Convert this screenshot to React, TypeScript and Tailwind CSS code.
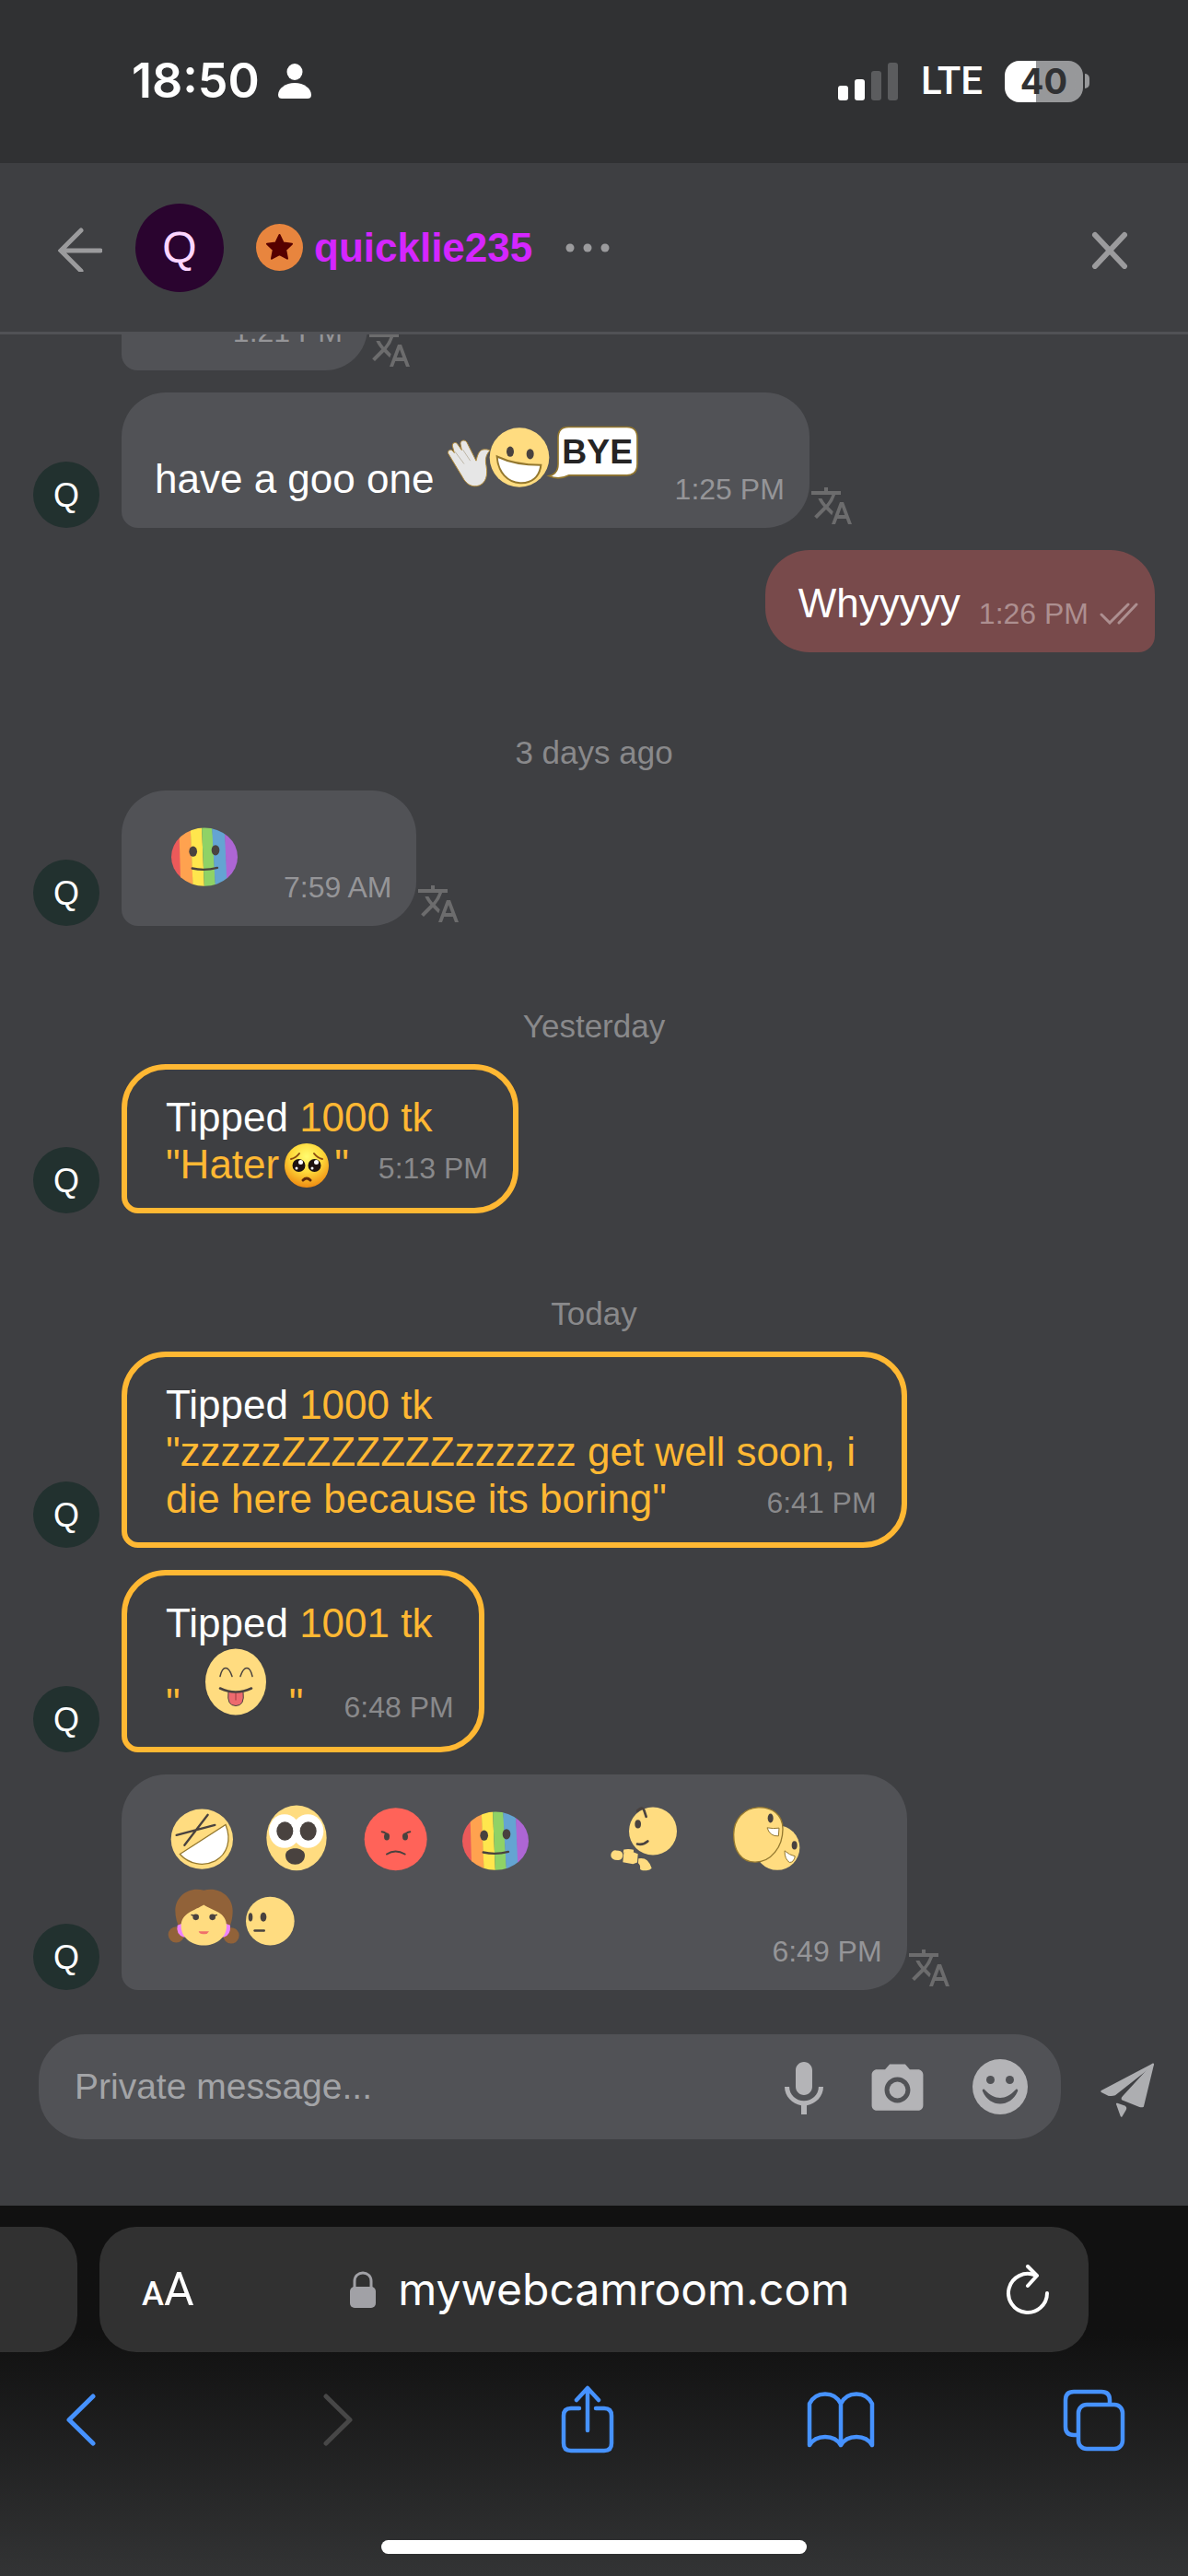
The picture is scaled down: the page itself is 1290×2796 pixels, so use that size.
import type { ReactNode } from "react";
import { MdCameraAlt, MdMic, MdTranslate } from "react-icons/md";

interface BubbleProps {
  time: string;
  lines?: ReactNode[];
  last?: ReactNode;
  avatar?: boolean;
  width?: string;
}

const YELLOW = "#ffdc80";
const INK = "#49423f";

/* ---------- Stickers ---------- */

const ByeSticker = () => (
  <svg className="inline-block h-[77px] w-[217px] align-baseline" viewBox="36 111 651 228">
    <path
      d="M44 212c-3-8 6-15 13-10l7 8-6-22c-2-10 10-15 16-7l14 20-4-20c-1-12 15-16 21-5l30 60c4-18 9-32 20-36 10-3 20 0 25 2-14 16-16 30-12 50 6 32-2 56-22 64-24 9-44-4-56-28Z"
      fill="#e6e6e6"
      stroke="#b08a3a"
      strokeWidth="3"
    />
    <path d="m66 206 30 40M92 200l24 36" stroke="#bdb6a6" strokeWidth="3" fill="none" />
    <circle cx="276" cy="225" r="97" fill={YELLOW} />
    <ellipse cx="246" cy="206" rx="12" ry="17" fill={INK} />
    <ellipse cx="311" cy="214" rx="12" ry="17" fill={INK} />
    <path
      d="M203 222c46 22 94 28 143 28-4 38-30 60-68 58-40-2-72-34-75-86Z"
      fill="#fff"
      stroke="#94782f"
      strokeWidth="6"
    />
    <path
      d="M436 126h190q34 0 34 36v84q0 37-34 37H438c-20 10-44 12-66 2 22-4 30-16 30-38v-85q0-36 34-36Z"
      fill="#fff"
      stroke="#94782f"
      strokeWidth="5"
    />
    <text
      x="530"
      y="245"
      textAnchor="middle"
      fontFamily="Liberation Sans, Arial, sans-serif"
      fontWeight="700"
      fontSize="112"
      fill="#262424"
    >
      BYE
    </text>
  </svg>
);

const LaughSticker = () => (
  <svg className="inline-block h-[77px] w-[108px] align-baseline" viewBox="54 84 324 228">
    <ellipse cx="208" cy="197" rx="101" ry="98" fill={YELLOW} />
    <path d="M125 184 250 151M151 217l76-99" stroke={INK} strokeWidth="7" strokeLinecap="round" />
    <path
      d="M136 246 285 150c20 50 6 96-34 118-40 20-86 10-115-22Z"
      fill="#fff"
      stroke="#94782f"
      strokeWidth="4"
    />
  </svg>
);

const ShockSticker = () => (
  <svg className="inline-block h-[77px] w-[108px] align-baseline" viewBox="378 84 324 228">
    <ellipse cx="516" cy="193" rx="98" ry="106" fill={YELLOW} />
    <ellipse cx="477" cy="171" rx="51" ry="55" fill="#fff" />
    <ellipse cx="553" cy="171" rx="51" ry="55" fill="#fff" />
    <ellipse cx="478" cy="171" rx="27" ry="31" fill={INK} />
    <ellipse cx="554" cy="171" rx="27" ry="31" fill={INK} />
    <path d="M480 250c0-30 63-30 63 0 0 40-63 40-63 0Z" fill={INK} />
  </svg>
);

const AngrySticker = () => (
  <svg className="inline-block h-[77px] w-[100px] align-baseline" viewBox="702 84 300 228">
    <circle cx="839" cy="197" r="102" fill="#ff6359" />
    <ellipse cx="810" cy="189" rx="9" ry="12" fill={INK} />
    <ellipse cx="870" cy="189" rx="9" ry="12" fill={INK} />
    <path
      d="M794 173q14 2 22 14M886 173q-14 2-22 14M810 246q28-18 59 0"
      fill="none"
      stroke={INK}
      strokeWidth="6"
      strokeLinecap="round"
    />
  </svg>
);

const RainbowSticker = ({ id }: { id: string }) => (
  <svg className="inline-block h-[77px] w-[108px] align-baseline" viewBox="1004 84 324 228">
    <clipPath id={id}>
      <ellipse cx="1166" cy="203" rx="108" ry="95" />
    </clipPath>
    <g clipPath={`url(#${id})`}>
      <path fill="#eb5a5a" d="M1050 100h35l6 210h-41z" />
      <path fill="#ffa24f" d="M1083 100h38l9 210h-41z" />
      <path fill="#ffe64d" d="M1120 100h37l9 210h-37z" />
      <path fill="#8fd266" d="M1157 100h34l12 210h-37z" />
      <path fill="#64a4d2" d="M1190 100h42l10 210h-40z" />
      <path fill="#ad66d4" d="M1231 100h50v210h-41z" />
    </g>
    <ellipse cx="1129" cy="185" rx="13" ry="17" fill={INK} />
    <ellipse cx="1202" cy="181" rx="13" ry="17" fill={INK} />
    <path d="M1126 240q41 9 82-2" fill="none" stroke={INK} strokeWidth="7" strokeLinecap="round" />
  </svg>
);

const ThinkSticker = () => (
  <svg className="inline-block h-[77px] w-[148px] align-baseline" viewBox="-24 84 444 228">
    <circle cx="327" cy="171" r="78" fill={YELLOW} />
    <path
      d="M276 105q16-16 22-2l7 21M276 213q20 4 34-9"
      fill="none"
      stroke={INK}
      strokeWidth="8"
      strokeLinecap="round"
    />
    <ellipse cx="278" cy="148" rx="10" ry="14" fill={INK} />
    <rect x="190" y="234" width="39" height="31" rx="15" fill={YELLOW} transform="rotate(6 209 249)" />
    <path d="M232 231q16-4 32 1v9h-34z" fill={YELLOW} />
    <path d="M232 240q22-6 46 5l-2 28-14 5-33-6z" fill={YELLOW} />
    <path d="M280 260q18-3 28 6 12 12 15 26-6 8-20 7-16 1-18-6 2-12-6-18z" fill={YELLOW} />
  </svg>
);

const HugSticker = () => (
  <svg className="inline-block h-[77px] w-[140px] align-baseline" viewBox="420 84 420 228">
    <circle cx="732" cy="225" r="73" fill={YELLOW} />
    <ellipse cx="788" cy="217" rx="9" ry="14" fill={INK} />
    <path d="M756 235q16 14 34 18-4 20-18 20-16-10-16-38Z" fill="#fff" stroke="#94782f" strokeWidth="3" />
    <path
      d="M670 94c46-2 80 24 80 70 0 58-38 108-90 108-46 0-70-38-70-90 0-50 34-86 80-88Z"
      fill={YELLOW}
      stroke="#94782f"
      strokeWidth="4"
    />
    <ellipse cx="710" cy="129" rx="9" ry="15" fill={INK} />
    <path d="M699 160q20 4 39 1l-2 26q-28 2-37-27Z" fill="#fff" stroke="#94782f" strokeWidth="3" />
  </svg>
);

const GirlSticker = () => (
  <svg className="inline-block h-[77px] w-[94px] align-baseline" viewBox="54 345 282 228">
    <circle cx="124" cy="508" r="26" fill="#916239" />
    <circle cx="303" cy="511" r="26" fill="#916239" />
    <path
      d="M214 364c44-14 94 16 94 66 0 26-6 44-12 58H135c-8-18-14-36-14-58 0-48 46-80 93-66Z"
      fill="#916239"
    />
    <path d="M128 478q-6 30 20 38h132q22-6 20-38l-20-8H148z" fill="#ee82ff" />
    <path d="M214 411c28 20 76 22 74 72-2 36-34 60-74 60s-72-24-74-60c-2-46 46-54 74-72Z" fill={YELLOW} />
    <circle cx="188" cy="451" r="10" fill={INK} />
    <circle cx="242" cy="451" r="10" fill={INK} />
    <path d="m174 444 14 4M256 444l-14 4" stroke={INK} strokeWidth="4" strokeLinecap="round" />
    <path d="M197 497h34q-6 11-17 9-14 1-17-9Z" fill="#f0706a" />
  </svg>
);

const SideSticker = () => (
  <svg className="inline-block h-[77px] w-[68px] align-baseline" viewBox="336 345 204 228">
    <circle cx="430" cy="464" r="79" fill={YELLOW} />
    <ellipse cx="366" cy="451" rx="7" ry="14" fill={INK} />
    <ellipse cx="408" cy="451" rx="10" ry="15" fill={INK} />
    <path d="M380 495h30" stroke={INK} strokeWidth="8" strokeLinecap="round" />
  </svg>
);

const TongueSticker = () => (
  <svg className="inline-block h-[77px] w-[118px] align-baseline" viewBox="0 0 118 76">
    <ellipse cx="60" cy="38" rx="33" ry="36" fill={YELLOW} />
    <path
      d="M43 32q2-9 6-9t7 9M65 32q3-9 7-9t6 9"
      fill="none"
      stroke={INK}
      strokeWidth="1.5"
      strokeLinecap="round"
    />
    <path d="M52 49h16q2 15-8 15t-8-15Z" fill="#ed6a6e" stroke={INK} strokeWidth="1" />
    <path d="M60 50v8" stroke="#b94a50" strokeWidth="1.5" />
    <path d="M43 45q17 8 34 0" fill="none" stroke={INK} strokeWidth="2.5" strokeLinecap="round" />
  </svg>
);

const PleadingEmoji = () => (
  <svg className="mx-[6px] inline-block size-12 align-bottom" viewBox="0 0 48 48">
    <defs>
      <radialGradient id="pleading" cx="50%" cy="30%" r="70%">
        <stop offset="0" stopColor="#fffc70" />
        <stop offset="0.5" stopColor="#ffd93a" />
        <stop offset="1" stopColor="#ee8b12" />
      </radialGradient>
    </defs>
    <circle cx="24" cy="24" r="24" fill="url(#pleading)" />
    <path
      d="M7 17q5-1 9-6M41 17q-5-1-9-6"
      fill="none"
      stroke="#8a4a10"
      strokeWidth="2"
      strokeLinecap="round"
    />
    <circle cx="15.500" cy="24" r="7" fill="#1e1210" />
    <circle cx="32.500" cy="24" r="7" fill="#1e1210" />
    <circle cx="17.500" cy="20.500" r="2.500" fill="#fff" />
    <circle cx="34.500" cy="20.500" r="2.500" fill="#fff" />
    <circle cx="13" cy="27" r="1.500" fill="#fff" />
    <circle cx="30" cy="27" r="1.500" fill="#fff" />
    <path d="M20 40q4-4 8 0" fill="none" stroke="#5e2a0c" strokeWidth="3" strokeLinecap="round" />
  </svg>
);

/* ---------- Chat pieces ---------- */

const Avatar = () => (
  <div className="flex size-[72px] shrink-0 items-center justify-center rounded-full bg-[#22312f] text-[36px] text-white">
    Q
  </div>
);

const DateLabel = ({ children }: { children: ReactNode }) => (
  <div className="flex h-[150px] shrink-0 items-end justify-center pb-[22px] text-[35px] leading-[39px] text-[#89898b]">
    {children}
  </div>
);

function Received({ time, lines = [], last, avatar = true, width = "" }: BubbleProps) {
  return (
    <div className="flex shrink-0 items-end">
      {avatar ? <Avatar /> : <div className="w-[72px] shrink-0" />}
      <div
        className={`ml-6 min-w-[267px] rounded-[48px] rounded-bl-[18px] bg-[#515256] pt-8 pr-[27px] pb-7 pl-9 text-white ${width}`}
      >
        {lines.map((line, i) => (
          <div key={i} className="whitespace-nowrap">
            {line}
          </div>
        ))}
        <div className="flex items-end justify-between gap-8">
          <div className="whitespace-nowrap">{last}</div>
          <time className="-mb-1 text-[32px] leading-9 whitespace-nowrap text-[#959598]">{time}</time>
        </div>
      </div>
      <button type="button" aria-label="Translate" className="shrink-0 text-[#6c6c6d]">
        <MdTranslate className="size-12" />
      </button>
    </div>
  );
}

function Tip({ amount, time, lines = [], last, width = "" }: BubbleProps & { amount: number }) {
  return (
    <div className="flex shrink-0 items-end">
      <Avatar />
      <div
        className={`ml-6 rounded-[48px] rounded-bl-[18px] border-[6px] border-[#ffb833] pt-[26px] pr-[27px] pb-[22px] pl-[42px] text-[#ffb833] ${width}`}
      >
        <div>
          <span className="text-white">Tipped</span> {amount} tk
        </div>
        {lines.map((line, i) => (
          <div key={i} className="whitespace-nowrap">
            {line}
          </div>
        ))}
        <div className="flex items-end justify-between gap-8">
          <div className="whitespace-nowrap">{last}</div>
          <time className="mb-[3px] text-[32px] leading-9 whitespace-nowrap text-[#89898b]">{time}</time>
        </div>
      </div>
    </div>
  );
}

function StatusBar() {
  return (
    <div className="flex h-[177px] shrink-0 items-start justify-between bg-[#303133] pt-[60px] pr-[107px] pl-[143px] font-[Inter,sans-serif] text-white">
      <div className="flex items-center gap-5">
        <span className="text-[52px] leading-14 font-semibold">18:50</span>
        <svg className="h-[38px] w-9" viewBox="0 0 36 38" fill="currentColor">
          <ellipse cx="18" cy="9" rx="8.500" ry="9" />
          <path d="M0 34c0-7 8-13 18-13s18 6 18 13c0 3-2 4-4 4H4c-2 0-4-1-4-4Z" />
        </svg>
      </div>
      <div className="flex items-center">
        <svg className="h-[41px] w-[66px]" viewBox="0 0 66 41">
          <rect x="0" y="25" width="11" height="16" rx="3" fill="#fff" />
          <rect x="18" y="18" width="11" height="23" rx="3" fill="#fff" />
          <rect x="36" y="9" width="11" height="32" rx="3" fill="#5b5c5e" />
          <rect x="54" y="0" width="11" height="41" rx="3" fill="#5b5c5e" />
        </svg>
        <span className="ml-6 font-[Roboto,sans-serif] text-[42px] leading-14 font-medium">LTE</span>
        <div className="ml-6 flex items-center gap-[2px]">
          <div className="flex h-[45px] w-[85px] items-center justify-center rounded-2xl bg-linear-to-r from-white from-40% to-[#97989a] to-40% text-[38px] font-bold text-[#303133]">
            40
          </div>
          <div className="h-4 w-[5px] rounded-r-full bg-[#97989a]" />
        </div>
      </div>
    </div>
  );
}

function ChatHeader() {
  return (
    <header className="flex h-[186px] shrink-0 items-center border-b-[3px] border-[#515256] pr-16 pl-[63px]">
      <button type="button" aria-label="Back" className="mt-1 text-[#9b9b9d]">
        <svg
          className="size-12"
          viewBox="0 0 48 48"
          fill="none"
          stroke="currentColor"
          strokeWidth="5"
          strokeLinecap="round"
        >
          <path d="M46 25H4M25 3 3 25l22 22" />
        </svg>
      </button>
      <div className="ml-9 flex size-24 items-center justify-center rounded-full bg-[#2a042f] text-[48px] text-[#fcd5ff]">
        Q
      </div>
      <svg className="ml-[35px] size-[51px]" viewBox="0 0 51 51">
        <circle cx="25.500" cy="25.500" r="25.500" fill="#e8853e" />
        <path
          d="m25.500 12 4.200 8.600 9.300 1.200-6.800 6.400 1.800 9.500-8.500-4.600-8.500 4.600 1.800-9.500-6.800-6.400 9.300-1.200Z"
          fill="#560000"
          stroke="#560000"
          strokeWidth="2"
          strokeLinejoin="round"
        />
      </svg>
      <a href="#profile" className="ml-3 text-[44px] font-bold text-[#d426ff]">
        quicklie235
      </a>
      <button type="button" aria-label="More options" className="ml-9 text-[#9b9b9d]">
        <svg className="h-3 w-12" viewBox="0 0 48 12" fill="currentColor">
          <circle cx="5" cy="6" r="4.500" />
          <circle cx="24" cy="6" r="4.500" />
          <circle cx="43" cy="6" r="4.500" />
        </svg>
      </button>
      <button type="button" aria-label="Close" className="mt-1 ml-auto text-[#9b9b9d]">
        <svg
          className="size-[42px]"
          viewBox="0 0 42 42"
          fill="none"
          stroke="currentColor"
          strokeWidth="6"
          strokeLinecap="round"
        >
          <path d="m5 5 32 34M37 5 5 39" />
        </svg>
      </button>
    </header>
  );
}

function Composer() {
  return (
    <form className="flex shrink-0 items-center pr-9 pb-[72px] pl-[42px]">
      <div className="flex h-[114px] flex-1 items-center rounded-[50px] bg-[#515256] pr-[30px] pl-[39px] text-[#b4b4b7]">
        <input
          type="text"
          aria-label="Private message"
          placeholder="Private message..."
          className="min-w-0 flex-1 bg-transparent text-[39px] text-white outline-none placeholder:text-[#a3a4a7]"
        />
        <div className="flex items-center pt-[6px]">
          <button type="button" aria-label="Record audio" className="mr-8">
            <MdMic className="size-[72px]" />
          </button>
          <button type="button" aria-label="Send photo" className="mr-[42px]">
            <MdCameraAlt className="size-[67px]" />
          </button>
          <button type="button" aria-label="Emoji">
            <svg className="size-[72px]" viewBox="0 0 72 72">
              <circle cx="36" cy="33" r="30" fill="currentColor" />
              <circle cx="25.500" cy="25.500" r="4.500" fill="#515256" />
              <circle cx="46.500" cy="25.500" r="4.500" fill="#515256" />
              <path
                d="M17 38c-1-2 1-3 2-2 11 12 23 12 34 0 1-1 3 0 2 2-8 18-30 18-38 0Z"
                fill="#515256"
              />
            </svg>
          </button>
        </div>
      </div>
      <button type="submit" aria-label="Send" className="ml-[43px] text-[#adaeb1]">
        <svg
          className="h-[78px] w-[59px]"
          viewBox="1244 152 177 234"
          fill="currentColor"
          stroke="currentColor"
          strokeWidth="6"
          strokeLinejoin="round"
        >
          <path d="M1248 284 1415 196l-124 98q-10 4-22 1Z" />
          <path d="m1415 196-33 136q-4 2-10 0l-56-22q-3-3 2-8Z" />
          <path d="m1298 325 24 8q6 4 2 11l-12 20Z" />
        </svg>
      </button>
    </form>
  );
}

function BrowserBar() {
  return (
    <footer className="shrink-0 bg-linear-to-b from-[#111111] from-35% to-[#333435] font-[Inter,sans-serif] text-white">
      <div className="flex gap-6 pt-[23px] pr-[108px]">
        <div className="h-[136px] w-[84px] rounded-r-[40px] bg-[#313131]" />
        <div className="flex h-[136px] flex-1 items-center justify-between rounded-[40px] bg-[#313131] pr-[42px] pl-[46px]">
          <button type="button" aria-label="Page settings" className="font-[Roboto,sans-serif]">
            <span className="text-[36px] font-medium">A</span>
            <span className="text-[50px]">A</span>
          </button>
          <a href="https://mywebcamroom.com" className="flex items-center gap-6">
            <svg className="h-10 w-7" viewBox="0 0 28 40">
              <rect x="0" y="17" width="28" height="23" rx="5" fill="#a1a1a6" />
              <path d="M5 18v-7c0-12 18-12 18 0v7" fill="none" stroke="#a1a1a6" strokeWidth="3" />
            </svg>
            <span className="text-[48px] leading-14">mywebcamroom.com</span>
          </a>
          <button type="button" aria-label="Reload">
            <svg
              className="h-[54px] w-12"
              viewBox="0 0 48 54"
              fill="none"
              stroke="currentColor"
              strokeWidth="4"
              strokeLinecap="round"
              strokeLinejoin="round"
            >
              <path d="M45 31A21 21 0 1 1 32 11.500" />
              <path d="M24 2 34 12 24 23" />
            </svg>
          </button>
        </div>
      </div>
      <nav className="flex h-[147px] items-center justify-between pr-[65px] pl-[50px] text-[#4692ff]">
        <button type="button" aria-label="Back" className="flex w-[74px] justify-center">
          <svg className="h-[57px] w-9" viewBox="0 0 36 57" fill="none" stroke="currentColor" strokeWidth="5" strokeLinecap="round" strokeLinejoin="round">
            <path d="M32 3 6 28.500 32 54" />
          </svg>
        </button>
        <button type="button" aria-label="Forward" disabled className="flex w-[74px] justify-center text-[#474747]">
          <svg className="h-[57px] w-12" viewBox="-12 0 48 57" fill="none" stroke="currentColor" strokeWidth="5" strokeLinecap="round" strokeLinejoin="round">
            <path d="m4 3 26 25.500L4 54" />
          </svg>
        </button>
        <button type="button" aria-label="Share" className="flex w-[74px] justify-center">
          <svg className="h-[76px] w-[58px]" viewBox="0 0 58 76" fill="none" stroke="currentColor" strokeWidth="4.500" strokeLinecap="round" strokeLinejoin="round">
            <path d="M20 25h-9q-8 0-8 8v30q0 8 8 8h36q8 0 8-8V33q0-8-8-8h-9" />
            <path d="M29 49V4M17 16 29 3l12 13" />
          </svg>
        </button>
        <button type="button" aria-label="Bookmarks" className="flex w-[74px] justify-center">
          <svg className="h-[62px] w-[74px]" viewBox="0 0 74 62" fill="none" stroke="currentColor" strokeWidth="4.500" strokeLinejoin="round">
            <path d="M37 13C30-1 10-1 3 13v45c7-12 27-12 34 0 7-12 27-12 34 0V13C64-1 44-1 37 13ZM37 13v45" />
          </svg>
        </button>
        <button type="button" aria-label="Tabs" className="flex w-[74px] justify-center">
          <svg className="size-[68px]" viewBox="0 0 68 68" fill="none" stroke="currentColor" strokeWidth="4.500">
            <path d="M17 50h-5q-9 0-9-9V12q0-9 9-9h30q9 0 9 9v4" />
            <rect x="17" y="17" width="48" height="48" rx="9" />
          </svg>
        </button>
      </nav>
      <div className="mx-auto mt-[57px] mb-6 h-[15px] w-[462px] max-w-full rounded-full bg-white" />
    </footer>
  );
}

export default function App() {
  return (
    <div className="flex h-screen flex-col bg-[#3e3f42] font-['Liberation_Sans',Arial,sans-serif]">
      <StatusBar />
      <ChatHeader />

      {/* Messages */}
      <main className="flex min-h-0 flex-1 flex-col justify-end overflow-hidden px-9 pb-12 text-[44px] leading-[51px]">
        <Received time="1:21 PM" avatar={false} />
        <div className="h-6 shrink-0" />
        <Received
          time="1:25 PM"
          last={
            <>
              have a goo one <ByeSticker />
            </>
          }
        />

        <div className="mt-6 flex shrink-0 items-end gap-5 self-end rounded-[48px] rounded-br-[18px] bg-[#784a4b] pt-8 pr-[18px] pb-7 pl-9 text-white">
          <div>Whyyyyy</div>
          <div className="-mb-1 flex items-center gap-3 text-[32px] leading-9 text-[#ad8f90]">
            <time>1:26 PM</time>
            <svg
              className="h-6 w-[42px]"
              viewBox="0 0 42 24"
              fill="none"
              stroke="currentColor"
              strokeWidth="3"
              strokeLinecap="round"
            >
              <path d="m2 13 9 9L31 2M21 22 40 2" />
            </svg>
          </div>
        </div>

        <DateLabel>3 days ago</DateLabel>
        <Received time="7:59 AM" last={<RainbowSticker id="rainbow-a" />} />

        <DateLabel>Yesterday</DateLabel>
        <Tip
          amount={1000}
          time="5:13 PM"
          last={
            <>
              "Hater
              <PleadingEmoji />"
            </>
          }
        />

        <DateLabel>Today</DateLabel>
        <div className="flex shrink-0 flex-col gap-6">
          <Tip
            amount={1000}
            time="6:41 PM"
            width="w-[70%]"
            lines={['"zzzzzZZZZZZZzzzzzz get well soon, i']}
            last={'die here because its boring"'}
          />
          <Tip
            amount={1001}
            time="6:48 PM"
            last={
              <>
                "<TongueSticker />"&nbsp;
              </>
            }
          />
          <Received
            time="6:49 PM"
            width="w-[70%]"
            lines={[
              <>
                <LaughSticker />
                <ShockSticker />
                <AngrySticker />
                <RainbowSticker id="rainbow-b" />
                <ThinkSticker />
                <HugSticker />
              </>,
            ]}
            last={
              <>
                <GirlSticker />
                <SideSticker />
              </>
            }
          />
        </div>
      </main>

      <Composer />
      <BrowserBar />
    </div>
  );
}
